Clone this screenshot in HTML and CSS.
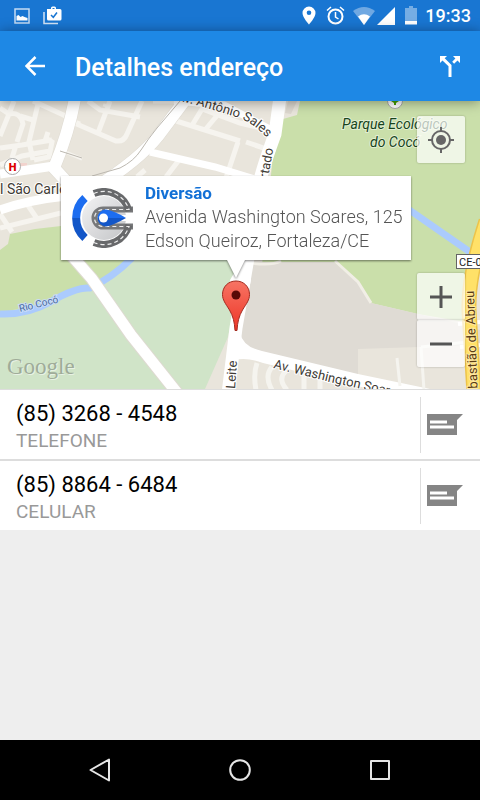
FILE: index.html
```html
<!DOCTYPE html>
<html lang="pt-BR">
<head>
    <meta charset="UTF-8">
    <meta name="viewport" content="width=device-width, initial-scale=1.0">
    <title>Detalhes endereço</title>
    <link rel="stylesheet" href="styles.css">
</head>
<body>
    <div class="status-bar">
        <div class="status-left">
            <svg width="16" height="16" viewBox="0 0 16 16">
                <rect x="1" y="1" width="14" height="14" fill="none" stroke="#c5dbf3" stroke-width="1.5"/>
                <path d="M2.500 12.500V8l2-1 2 2 2-1 2 1 3 1v2.500z" fill="#fff"/>
            </svg>
            <svg width="19" height="19" viewBox="0 0 19 19">
                <path d="M1 6v11.500h14" fill="none" stroke="#d5e5f6" stroke-width="1.500"/>
                <path d="M4 3h4V2q0-1.500 1.500-1.500h2Q13 .5 13 2v1h4q1.500 0 1.500 1.500V13q0 1.500-1.500 1.500H5.500Q4 14.500 4 13zM9.500 3h2V2h-2z" fill="#fff"/>
                <path d="M8 9l2.300 2.300L14 6.500" fill="none" stroke="#1976d2" stroke-width="1.500"/>
            </svg>
        </div>
        <div class="status-right">
            <svg width="14" height="19" viewBox="0 0 14 19">
                <path d="M7 0.500a6.500 6.500 0 0 0-6.500 6.500c0 4.500 6.500 11.500 6.500 11.500S13.500 11.500 13.500 7A6.500 6.500 0 0 0 7 .5zm0 4a2.300 2.300 0 1 1 0 4.600 2.300 2.300 0 0 1 0-4.600z" fill="#fff"/>
            </svg>
            <svg class="alarm" width="19" height="19" viewBox="0 0 19 19">
                <circle cx="9.500" cy="10.500" r="7" fill="none" stroke="#fff" stroke-width="2"/>
                <path d="M9.500 6v5l3 2M1 4.500L5 1M18 4.500L14 1" fill="none" stroke="#fff" stroke-width="1.500"/>
            </svg>
            <svg class="wifi" width="22" height="18" viewBox="0 0 22 18">
                <path d="M11 18L0 4Q11-4 22 4z" fill="#6fa8e2"/>
                <path d="M11 18L5 9.500q6-4.500 12 0z" fill="#fff"/>
            </svg>
            <svg width="18" height="18" viewBox="0 0 18 18"><path d="M18 0v18H0z" fill="#fff"/></svg>
            <svg class="battery" width="12" height="19" viewBox="0 0 12 19">
                <path d="M0 2h4V0h4v2h4v13H0z" fill="#75ade4"/>
                <path d="M0 15h12v3.500H0z" fill="#fff"/>
            </svg>
            <span class="clock">19:33</span>
        </div>
    </div>

    <header class="toolbar">
        <button class="icon-button" aria-label="Voltar">
            <svg width="20" height="20" viewBox="0 0 20 20"><path d="M20 10H2M10.500 1L1.500 10l9 9" fill="none" stroke="#fff" stroke-width="2.500"/></svg>
        </button>
        <h1>Detalhes endereço</h1>
        <button class="icon-button route" aria-label="Rotas">
            <svg width="20" height="21" viewBox="0 0 20 21">
                <path d="M0 0h7L4.700 2.300l6.800 6.700V21h-3V10.300L2.500 4.500 0 7zM13 0h7v7l-2.500-2.500-3.400 3.300-1.900-2 3.200-3.400z" fill="#fff"/>
            </svg>
        </button>
    </header>

    <main>
        <section class="map">
            <svg class="map-canvas" viewBox="0 101 480 288" preserveAspectRatio="xMidYMid slice">
                <rect y="101" width="480" height="288" fill="#e9e5dc"/>
                <!-- parks -->
                <path d="M300 101L297 115 283 119 280 136 274 145 262 265H336L360 285 371 303 418 314 465 322 480 260V101z" fill="#cadfaa"/>
                <path d="M0 250L8 244 10 234 35 229 61 226 75 260H140L60 300 0 316z" fill="#cadfaa"/>
                <path d="M0 313L55 300 92 285 135 258H245L228 337 205 389H0z" fill="#d0e4c8"/>
                <path d="M84 265l26-4h20l-36 21z" fill="#cadfaa"/>
                <path d="M251 262H334L360 285 371 303 418 314 466 325 480 330V345L358 349V380L240 350V300z" fill="#dfdbd4"/>
                <path d="M335 261L358 282 371 303M251 263q20 3 30-2" fill="none" stroke="#f1eee6" stroke-width="3"/>
                <!-- river -->
                <path d="M0 314Q28 315 52 301T90 288Q112 278 132 258" fill="none" stroke="#abcbfd" stroke-width="7"/>
                <path d="M408 209L480 259" fill="none" stroke="#abcbfd" stroke-width="7"/>
                <!-- small streets -->
                <g fill="none" stroke="#f6f4ef" stroke-width="5">
                    <path d="M0 108L9 114 0 136M9 114Q20 111 23 124L17 142M14 101L9 114M33 101L70 118M38 104L28 146M20 116L33 120"/>
                    <path d="M0 148L22 145 52 140M0 165L22 156 50 151M16 145L12 158M48 132L46 138 52 142 49 157 34 160M30 146L33 160"/>
                    <path d="M72 122L116 141Q124 142 127 134L142 101M80 124L72 121M98 133L110 101M88 101L100 110 140 117M105 107L106 104"/>
                    <path d="M63 151L82 159" stroke-width="3"/>
                    <path d="M173 120L240 141M191 127L202 109L240 123 268 130M220 112L205 130M238 142L226 178M246 142L275 152M153 101L191 101"/>
                    <path d="M145 170L137 177M179 160L166 177M0 228L61 213M27 204L38 220M0 214L12 232"/>
                </g>
                <path d="M297 101L291 114 285 113 288 101z" fill="#ddd8cf"/>
                <path d="M11 163H27V169H11z" fill="#f2d3cd"/>
                <!-- avenues -->
                <g fill="none" stroke="#dedad1" stroke-width="13">
                    <path d="M75 98Q69 132 54 168L66 181"/>
                    <path d="M188 96L158 136Q139 160 96 187"/>
                    <path d="M72 256L92 279 131 335 178 394"/>
                </g>
                <g fill="none" stroke="#fff">
                    <path d="M75 98Q69 132 54 168L66 181" stroke-width="12"/>
                    <path d="M0 174L54 166M0 210Q28 200 66 196" stroke-width="9"/>
                    <path d="M188 96L158 136Q139 160 96 187" stroke-width="12"/>
                    <path d="M150 152L215 167 285 188M174 101L224 105 270 129" stroke-width="7"/>
                    <path d="M280 97L275 134Q264 164 260 180L246 258" stroke-width="13"/>
                    <path d="M72 256L92 279 131 335 178 394" stroke-width="11"/>
                </g>
                <path d="M248 258L236 328 228 394" fill="none" stroke="#fff" stroke-width="13"/>
                <path d="M251 260V280L240 333Q243 347 262 351L358 374 430 389H370L263 363Q248 357 234 360L230 280 242 260z" fill="#fff"/>
                <path d="M180 101L157 128Q148 139 141 150T120 168L92 176M82 158L60 151" fill="none" stroke="#bcb8b0"/>
                <g fill="none" stroke="#f5f4ef" stroke-width="5">
                    <path d="M257 363Q253 374 256 390M272 367Q264 376 272 390M286 371Q277 379 287 390M304 374V390M320 379V390"/>
                    <path d="M397 358L400 386M421 347L424 390M421 347L468 342" stroke-width="3"/>
                </g>
                <path d="M458 324L480 322M460 347L480 345" stroke="#fff" stroke-width="4"/>
                <path d="M486 221Q468 276 469 310L474 394" fill="none" stroke="#edc34a" stroke-width="15"/>
                <path d="M486 221Q468 276 469 310L474 394" fill="none" stroke="#ffe168" stroke-width="12"/>
                <!-- labels -->
                <path id="avenida" d="M176 100L200 106 236 117Q252 121 272 143" fill="none"/>
                <path id="washington" d="M273 368L330 382 410 400" fill="none"/>
                <g class="map-labels">
                    <text><textPath href="#avenida">Av. Antônio Sales</textPath></text>
                    <text transform="translate(268 179) rotate(-80)">rtado</text>
                    <text><textPath href="#washington">Av. Washington Soares</textPath></text>
                    <text transform="translate(235 389) rotate(-86)">Leite</text>
                    <text transform="translate(478 403) rotate(-92)" class="highway">Sebastião de Abreu</text>
                    <text x="0" y="194" class="place">l São Carlos</text>
                    <text x="342" y="129" class="park">Parque Ecológico</text>
                    <text x="370" y="147" class="park">do Cocó</text>
                    <text transform="translate(20 312) rotate(-14)" class="river">Rio Cocó</text>
                </g>
                <circle cx="12.500" cy="166.500" r="8" fill="#fff" stroke="#aaa"/>
                <text x="12.500" y="171" class="hospital">H</text>
                <circle cx="395" cy="101" r="7.500" fill="#fff" stroke="#aaa"/>
                <path d="M391 101h8l-3 2v2h-2v-2z" fill="#46a000"/>
                <rect x="456.500" y="254.500" width="40" height="14" fill="#fff" stroke="#646464"/>
                <text x="459" y="266" class="road-sign">CE-040</text>
            </svg>

            <span class="map-logo">Google</span>

            <svg class="marker" width="30" height="52" viewBox="0 0 30 52">
                <defs>
                    <linearGradient id="red" x2="0" y2="1"><stop stop-color="#f77464"/><stop offset="1" stop-color="#ed3526"/></linearGradient>
                </defs>
                <path d="M15 1C7 1 1.500 7 1.500 14.500c0 5.500 3 9 7 15.500 3.500 6 5 12 5.500 20.500h2C16.500 42 18 36 21.500 30c4-6.500 7-10 7-15.500C28.500 7 23 1 15 1z" fill="url(#red)" stroke="#a32b20"/>
                <circle cx="15" cy="15" r="4.500" fill="#590a06"/>
            </svg>

            <article class="info-window">
                <svg class="info-logo" width="61" height="60" viewBox="0 0 61 60">
                    <defs>
                        <linearGradient id="silver" x2="1" y2="1"><stop stop-color="#f3f3f4"/><stop offset="1" stop-color="#c4c5c8"/></linearGradient>
                        <linearGradient id="blue" x2="0" y2="1"><stop offset=".5" stop-color="#1c6df0"/><stop offset=".5" stop-color="#1256c8"/></linearGradient>
                    </defs>
                    <circle cx="32" cy="30" r="22" fill="url(#silver)"/>
                    <path d="M13 10A27 27 0 0 0 13 50" fill="none" stroke="url(#blue)" stroke-width="8"/>
                    <path d="M61 21.500H31a8.500 8.500 0 0 0 0 17h30" fill="none" stroke="#77787a" stroke-width="6"/>
                    <path d="M22 5.500A26 26 0 0 1 57 23M22 54.500A26 26 0 0 0 57 37" fill="none" stroke="#68696b" stroke-width="7"/>
                    <path d="M22 5.500A26 26 0 0 1 57 21.500H31a8.500 8.500 0 0 0 0 17h26A26 26 0 0 1 22 54.500" fill="none" stroke="#eee" stroke-width="1.200" stroke-dasharray="4 3"/>
                    <path d="M61 27H42v6h19z" fill="#fff"/>
                    <path d="M54 30Q42 22.500 34 21.500a8.500 8.500 0 1 0 0 17Q42 37 54 30z" fill="url(#blue)"/>
                    <circle cx="31.500" cy="30" r="4.500" fill="#fff"/>
                </svg>
                <div>
                    <h2>Diversão</h2>
                    <p>Avenida Washington Soares, 125</p>
                    <p>Edson Queiroz, Fortaleza/CE</p>
                </div>
            </article>

            <button class="map-button locate" aria-label="Minha localização">
                <svg width="26" height="26" viewBox="0 0 26 26">
                    <circle cx="13" cy="13" r="9" fill="none" stroke="#666" stroke-width="2"/>
                    <circle cx="13" cy="13" r="5" fill="#666"/>
                    <path d="M13 0v5M13 21v5M0 13h5M21 13h5" stroke="#666" stroke-width="2"/>
                </svg>
            </button>
            <div class="zoom-controls">
                <button class="map-button" aria-label="Aproximar">
                    <svg width="22" height="22" viewBox="0 0 22 22"><path d="M11 0v22M0 11h22" stroke="#555" stroke-width="3"/></svg>
                </button>
                <button class="map-button" aria-label="Afastar">
                    <svg width="22" height="22" viewBox="0 0 22 22"><path d="M0 11h22" stroke="#555" stroke-width="3"/></svg>
                </button>
            </div>
        </section>

        <ul class="phone-list">
            <li>
                <a href="tel:8532684548">
                    <span class="number">(85) 3268 - 4548</span>
                    <span class="type">TELEFONE</span>
                </a>
                <button class="sms" aria-label="Enviar mensagem para telefone">
                    <svg width="36" height="22" viewBox="0 0 36 22">
                        <path d="M0 0h36l-6 6v15H0z" fill="#858585"/>
                        <path d="M3 8h17M3 13h24" stroke="#fff" stroke-width="3"/>
                    </svg>
                </button>
            </li>
            <li>
                <a href="tel:8588646484">
                    <span class="number">(85) 8864 - 6484</span>
                    <span class="type">CELULAR</span>
                </a>
                <button class="sms" aria-label="Enviar mensagem para celular">
                    <svg width="36" height="22" viewBox="0 0 36 22">
                        <path d="M0 0h36l-6 6v15H0z" fill="#858585"/>
                        <path d="M3 8h17M3 13h24" stroke="#fff" stroke-width="3"/>
                    </svg>
                </button>
            </li>
        </ul>
    </main>

    <nav class="nav-bar">
        <button aria-label="Voltar">
            <svg width="24" height="24" viewBox="0 0 24 24"><path d="M21 1.500v21L2.500 12z" fill="none" stroke="#e6e6e6" stroke-width="2" stroke-linejoin="round"/></svg>
        </button>
        <button aria-label="Início">
            <svg width="24" height="24" viewBox="0 0 24 24"><circle cx="12" cy="12" r="9.800" fill="none" stroke="#e6e6e6" stroke-width="2"/></svg>
        </button>
        <button aria-label="Recentes">
            <svg width="24" height="24" viewBox="0 0 24 24"><rect x="3" y="3" width="18" height="18" fill="none" stroke="#e6e6e6" stroke-width="2" stroke-linejoin="round"/></svg>
        </button>
    </nav>
</body>
</html>
```
FILE: styles.css
```css
* {
    box-sizing: border-box;
}
body {
    font-family: Roboto, Arial, sans-serif;
    margin: 0;
    min-height: 100vh;
    display: flex;
    flex-direction: column;
    background-color: #eee;
}
h1, h2, p, ul {
    margin: 0;
    padding: 0;
}
svg {
    display: block;
    flex: none;
}
button {
    border: 0;
    padding: 0;
    background: none;
    display: flex;
    align-items: center;
    justify-content: center;
    cursor: pointer;
}

/* status bar */
.status-bar {
    height: 31px;
    padding: 0 10px 0 14px;
    background-color: #1976d2;
    display: flex;
    align-items: center;
    justify-content: space-between;
}
.status-left, .status-right {
    display: flex;
    align-items: center;
}
.status-left {
    gap: 13px;
}
.alarm {
    margin-left: 10px;
}
.wifi {
    margin: 0 2px 0 8px;
}
.battery {
    margin: 0 8px 0 10px;
}
.status-right {
    margin-right: -1px;
}
.clock {
    color: #fff;
    font-size: 18px;
    font-weight: 500;
    line-height: 32px;
}

/* toolbar */
.toolbar {
    height: 70px;
    padding: 0 6px 0 11px;
    background-color: #1e88e5;
    display: flex;
    align-items: center;
    position: relative;
    z-index: 1;
    box-shadow: 0 1px 12px rgba(0, 0, 0, 0.4);
}
.toolbar h1 {
    flex: 1;
    margin-left: 16px;
    padding-top: 4px;
    color: #fff;
    font-size: 25px;
    font-weight: 500;
    line-height: 32px;
}
.icon-button {
    width: 48px;
    height: 48px;
}

main {
    flex: 1;
}

/* map */
.map {
    position: relative;
    height: 288px;
    overflow: hidden;
}
.map-canvas {
    width: 100%;
    height: 100%;
}
.map-labels text {
    font-size: 13px;
    fill: #403a34;
    stroke: #fff;
    stroke-width: 2px;
    paint-order: stroke;
}
.map-labels .place {
    font-size: 14px;
}
.map-labels .park {
    font-size: 14px;
    font-style: italic;
    fill: #17441c;
    stroke: #e2eed2;
}
.map-labels .river {
    font-size: 10px;
    fill: #4a6a9c;
    stroke: #c9dcf8;
}
.map-labels .highway {
    fill: #5a3c14;
    stroke: #ffe9a0;
}
.hospital {
    font-size: 11px;
    font-weight: 900;
    fill: #d00;
    text-anchor: middle;
}
.road-sign {
    font-size: 11px;
    fill: #222;
}
.map-logo {
    position: absolute;
    left: 7px;
    bottom: 8px;
    font-family: "Liberation Serif", serif;
    font-size: 23px;
    line-height: 28px;
    color: #9fac99;
    text-shadow: 1px 1px 0 #e8f2e4;
}
.marker {
    position: absolute;
    left: calc(50% - 19px);
    top: 179px;
}
.info-window {
    position: absolute;
    left: calc(50% - 179px);
    top: 75px;
    width: 350px;
    height: 84px;
    padding: 5px 11px;
    display: flex;
    gap: 12px;
    background-color: #fff;
    filter: drop-shadow(0 1px 1px rgba(0, 0, 0, 0.5));
    font-size: 18px;
    font-weight: 300;
    line-height: 24px;
    color: #555;
    white-space: nowrap;
}
.info-window::after {
    content: "";
    position: absolute;
    top: 100%;
    left: 50%;
    margin-left: -9px;
    border: 9px solid transparent;
    border-top: 18px solid #fff;
    border-bottom: 0;
}
.info-logo {
    margin-top: 7px;
}
.info-window h2 {
    color: #1270d6;
    font-size: 17px;
    font-weight: 700;
}
.map-button {
    width: 48px;
    height: 47px;
    background-color: rgba(255, 255, 255, 0.7);
    border-radius: 2px;
    box-shadow: 0 0 2px rgba(0, 0, 0, 0.3);
}
.locate {
    position: absolute;
    top: 15px;
    right: 15px;
}
.zoom-controls {
    position: absolute;
    right: 15px;
    bottom: 22px;
}

/* phones */
.phone-list {
    list-style: none;
    border-top: 1px solid #ddd;
}
.phone-list li {
    display: flex;
    align-items: center;
    height: 69px;
    background-color: #fff;
}
.phone-list li + li {
    height: 71px;
    border-top: 2px solid #ddd;
}
.phone-list a {
    flex: 1;
    padding: 4px 0 0 16px;
    color: #000;
    text-decoration: none;
}
.number, .type {
    display: block;
}
.number {
    font-size: 22px;
    line-height: 28px;
}
.type {
    color: #999;
    font-size: 19px;
    line-height: 26px;
}
.sms {
    width: 60px;
    height: 56px;
    padding-left: 6px;
    justify-content: flex-start;
    border-left: 1px solid #ddd;
}

/* navigation bar */
.nav-bar {
    height: 60px;
    background-color: #000;
    display: flex;
    align-items: center;
    justify-content: center;
    gap: 92px;
}
.nav-bar button {
    width: 48px;
    height: 48px;
}
```
